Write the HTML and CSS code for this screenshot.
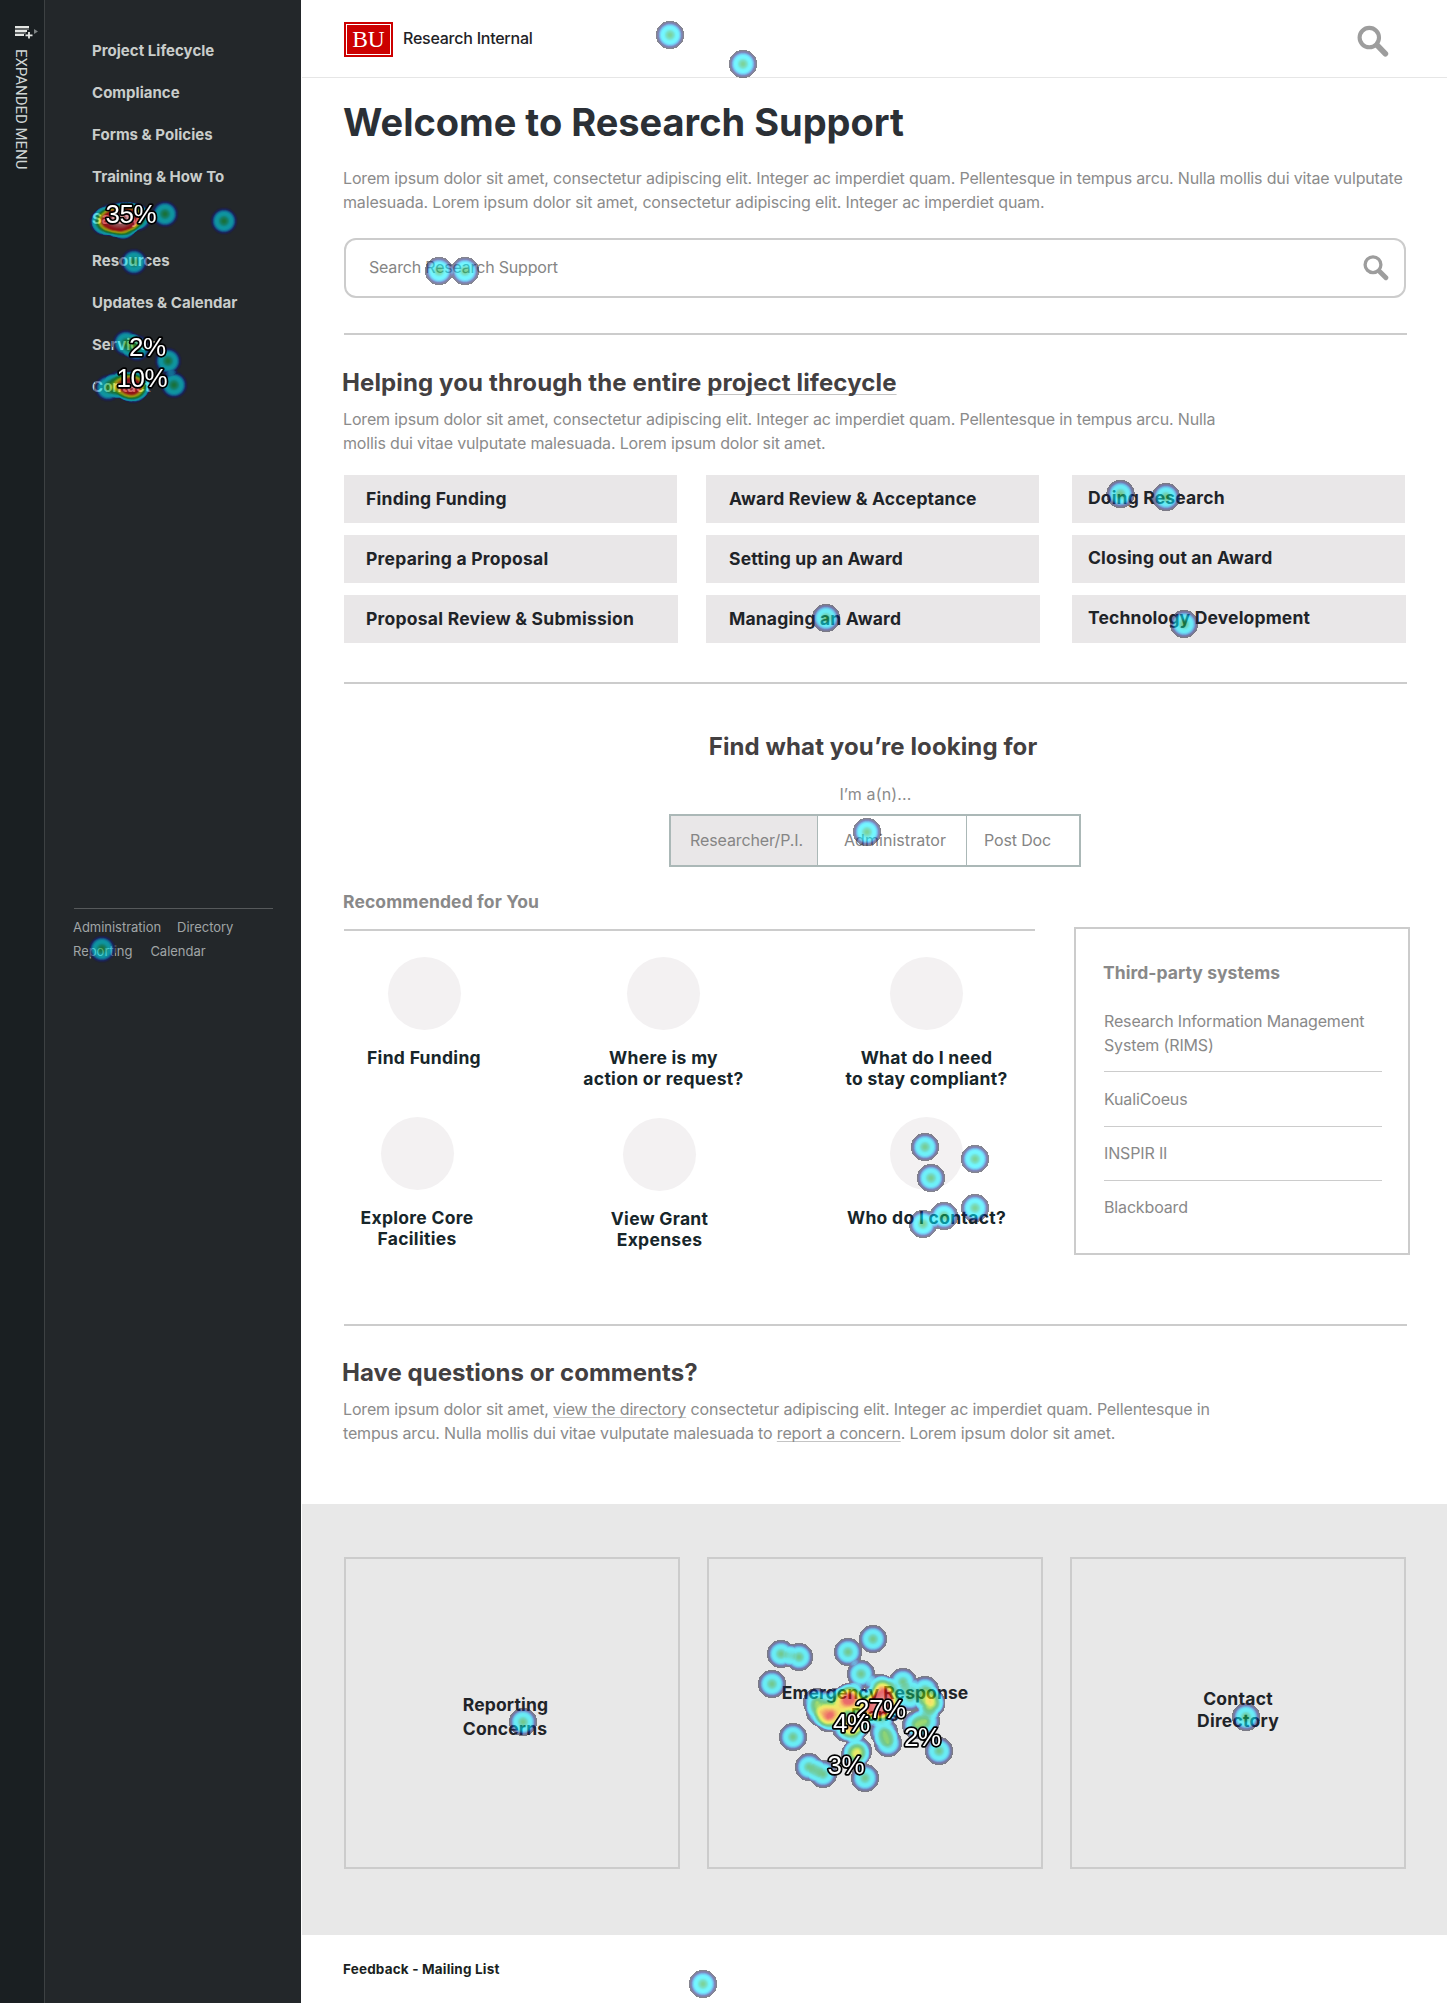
FILE: index.html
```html
<!DOCTYPE html>
<html lang="en">
<head>
<meta charset="utf-8">
<title>Research Support</title>
<link rel="stylesheet" href="styles.css">
</head>
<body>
<div class="page">
  <aside class="rail">
    <svg class="rail-icon" width="26" height="14" viewBox="0 0 26 14">
      <path d="M0 1h14M0 5h12M0 9h9" transform="translate(0 1)" stroke="#e4e6e4" stroke-width="2"/>
      <path d="M0 4h14M0 8h11" stroke="#a9adab" stroke-width="1"/>
      <path d="M14 7v7M10.5 10.5h7" stroke="#1a1f22" stroke-width="4"/>
      <path d="M14 7v6.5M10.5 10.3h7" stroke="#e4e6e4" stroke-width="1.8"/>
      <path d="M19 4l4 2.5-4 2.5z" fill="#7d8284"/>
    </svg>
    <span class="rail-label">EXPANDED MENU</span>
  </aside>
  <nav class="sidebar">
    <ul class="nav">
      <li>Project Lifecycle</li>
      <li>Compliance</li>
      <li>Forms &amp; Policies</li>
      <li>Training &amp; How To</li>
      <li>Safety</li>
      <li>Resources</li>
      <li>Updates &amp; Calendar</li>
      <li>Services</li>
      <li>Contact</li>
    </ul>
    <div class="subnav">
      <div class="subnav-row"><span>Administration</span><span>Directory</span></div>
      <div class="subnav-row wide"><span>Reporting</span><span>Calendar</span></div>
    </div>
  </nav>
  <main class="main">
    <header class="header">
      <div class="logo"><span>BU</span></div>
      <span class="site">Research Internal</span>
      <svg class="header-search" width="33" height="33" viewBox="0 0 33 33" fill="none" stroke="#9d9d9d">
        <circle cx="12.3" cy="12.6" r="9.7" stroke-width="4.1"/>
        <path d="M20.2 20.3l8.2 8.4" stroke-width="5.6" stroke-linecap="round"/>
      </svg>
    </header>

    <div class="content">
      <h1>Welcome to Research Support</h1>
      <p class="copy intro">Lorem ipsum dolor sit amet, consectetur adipiscing elit. Integer ac imperdiet quam. Pellentesque in tempus arcu. Nulla mollis dui vitae vulputate<br>malesuada. Lorem ipsum dolor sit amet, consectetur adipiscing elit. Integer ac imperdiet quam.</p>
      <div class="search">
        <span>Search Research Support</span>
        <svg width="27" height="27" viewBox="0 0 27 27" fill="none" stroke="#9d9d9d">
          <circle cx="10" cy="10.7" r="7.9" stroke-width="3.3"/>
          <path d="M16.4 17.2l6.5 6.6" stroke-width="4.8" stroke-linecap="round"/>
        </svg>
      </div>

      <section class="section lifecycle">
        <h2>Helping you through the entire <a>project lifecycle</a></h2>
        <p class="copy">Lorem ipsum dolor sit amet, consectetur adipiscing elit. Integer ac imperdiet quam. Pellentesque in tempus arcu. Nulla<br>mollis dui vitae vulputate malesuada. Lorem ipsum dolor sit amet.</p>
        <div class="tiles">
          <div class="tile">Finding Funding</div>
          <div class="tile mid">Award Review &amp; Acceptance</div>
          <div class="tile last">Doing Research</div>
          <div class="tile">Preparing a Proposal</div>
          <div class="tile mid">Setting up an Award</div>
          <div class="tile last">Closing out an Award</div>
          <div class="tile wider">Proposal Review &amp; Submission</div>
          <div class="tile mid wider">Managing an Award</div>
          <div class="tile last wider">Technology Development</div>
        </div>
      </section>

      <section class="section finder">
        <h2>Find what you’re looking for</h2>
        <p class="copy who">I’m a(n)...</p>
        <div class="tabs">
          <span class="tab active">Researcher/P.I.</span>
          <span class="tab second">Administrator</span>
          <span class="tab third">Post Doc</span>
        </div>
        <div class="columns">
          <div class="recommended">
            <h3>Recommended for You</h3>
            <div class="picks first">
              <div class="pick"><i></i>Find Funding</div>
              <div class="pick"><i></i>Where is my<br>action or request?</div>
              <div class="pick"><i></i>What do I need<br>to stay compliant?</div>
            </div>
            <div class="picks second">
              <div class="pick"><i></i>Explore Core<br>Facilities</div>
              <div class="pick lower"><i></i>View Grant<br>Expenses</div>
              <div class="pick"><i></i>Who do I contact?</div>
            </div>
          </div>
          <aside class="panel">
            <h3>Third-party systems</h3>
            <ul>
              <li>Research Information Management<br>System (RIMS)</li>
              <li>KualiCoeus</li>
              <li>INSPIR II</li>
              <li>Blackboard</li>
            </ul>
          </aside>
        </div>
      </section>

      <section class="section questions">
        <h2>Have questions or comments?</h2>
        <p class="copy">Lorem ipsum dolor sit amet, <a>view the directory</a> consectetur adipiscing elit. Integer ac imperdiet quam. Pellentesque in<br>tempus arcu. Nulla mollis dui vitae vulputate malesuada to <a>report a concern</a>. Lorem ipsum dolor sit amet.</p>
      </section>
    </div>

    <section class="cards">
      <div class="card reporting"><span>Reporting<br>Concerns</span></div>
      <div class="card emergency"><span>Emergency Response<br>Plans</span></div>
      <div class="card contact"><span>Contact<br>Directory</span></div>
    </section>
    <footer class="footer">Feedback - Mailing List</footer>
  </main>

  <svg class="heatmap" width="1447" height="2003" viewBox="0 0 1447 2003">
    <defs>
      <radialGradient id="click">
        <stop offset="0" stop-opacity=".44"/>
        <stop offset=".3" stop-opacity=".33"/>
        <stop offset=".55" stop-opacity=".21"/>
        <stop offset=".75" stop-opacity=".115"/>
        <stop offset=".93" stop-opacity=".04"/>
        <stop offset="1" stop-opacity="0"/>
      </radialGradient>
      <circle id="c" r="15" fill="url(#click)"/>
      <!-- maps accumulated click density to the heat palette -->
      <filter id="heat" x="0" y="0" width="1447" height="2003" filterUnits="userSpaceOnUse" color-interpolation-filters="sRGB">
        <feColorMatrix in="SourceGraphic" values="0 0 0 1 0  0 0 0 1 0  0 0 0 1 0  0 0 0 0 1"/>
        <feComponentTransfer result="palette">
          <feFuncR type="table" tableValues=".13 .13 .08 .03 0 0 0 .04 .06 .08 .3 .6 .9 1 1 .98 .94 .9 .9 .92 .98"/>
          <feFuncG type="table" tableValues=".13 .13 .12 .6 .9 .95 .9 .78 .7 .68 .78 .88 .93 .88 .68 .38 .05 0 .1 .3 .65"/>
          <feFuncB type="table" tableValues=".2 .2 .5 .9 1 1 .92 .6 .35 .2 .08 0 0 0 0 0 0 .04 .12 .32 .68"/>
        </feComponentTransfer>
        <feComponentTransfer in="SourceGraphic" result="shape">
          <feFuncA type="discrete" tableValues="0 .55 .55 .55 .55 .55 .55 .55 .55 .55 .55 .55 .55 .55 .55 .55 .55 .55 .55 .55 .55 .55 .55 .55 .55 .55 .55 .55 .55 .55"/>
        </feComponentTransfer>
        <feComposite in="palette" in2="shape" operator="in"/>
      </filter>
    </defs>
    <g filter="url(#heat)">
      <use href="#c" x="103" y="222"/><use href="#c" x="106" y="221"/><use href="#c" x="110" y="217"/><use href="#c" x="113" y="220"/><use href="#c" x="116" y="223"/><use href="#c" x="118" y="216"/><use href="#c" x="122" y="226"/><use href="#c" x="124" y="215"/><use href="#c" x="126" y="221"/><use href="#c" x="131" y="217"/><use href="#c" x="134" y="216"/><use href="#c" x="112" y="223"/><use href="#c" x="124" y="225"/><use href="#c" x="138" y="218"/><use href="#c" x="128" y="216"/><use href="#c" x="120" y="220"/><use href="#c" x="116" y="219"/><use href="#c" x="127" y="221"/>
      <use href="#c" x="165" y="214"/><use href="#c" x="224" y="221"/><use href="#c" x="134" y="262"/>
      <use href="#c" x="126" y="343"/><use href="#c" x="137" y="348"/><use href="#c" x="168" y="361"/><use href="#c" x="174" y="385"/>
      <use href="#c" x="108" y="388"/><use href="#c" x="119" y="384"/><use href="#c" x="124" y="386"/><use href="#c" x="129" y="387"/><use href="#c" x="133" y="390"/><use href="#c" x="136" y="387"/><use href="#c" x="128" y="384"/><use href="#c" x="138" y="384"/><use href="#c" x="131" y="387"/>
      <use href="#c" x="102" y="949"/>
      <use href="#c" x="670" y="35"/><use href="#c" x="743" y="64"/><use href="#c" x="439" y="271"/><use href="#c" x="465" y="271"/>
      <use href="#c" x="826" y="618"/><use href="#c" x="1120.500" y="494"/><use href="#c" x="1166" y="497"/><use href="#c" x="1184" y="624"/><use href="#c" x="867" y="832"/>
      <use href="#c" x="925" y="1147"/><use href="#c" x="975" y="1159"/><use href="#c" x="931" y="1178"/><use href="#c" x="975" y="1208"/><use href="#c" x="944" y="1216"/><use href="#c" x="923" y="1224"/>
      <use href="#c" x="523" y="1722"/><use href="#c" x="1246" y="1717"/><use href="#c" x="703" y="1984"/>
      <use href="#c" x="781" y="1654"/><use href="#c" x="799" y="1657"/><use href="#c" x="848" y="1652"/><use href="#c" x="873" y="1639"/><use href="#c" x="772" y="1684"/><use href="#c" x="861" y="1674"/><use href="#c" x="793" y="1737"/><use href="#c" x="809" y="1767"/><use href="#c" x="823" y="1774"/><use href="#c" x="865" y="1778"/><use href="#c" x="939" y="1751"/>
      <use href="#c" x="903" y="1682"/><use href="#c" x="910" y="1697"/><use href="#c" x="925" y="1690"/><use href="#c" x="930" y="1701"/><use href="#c" x="931" y="1704"/><use href="#c" x="926" y="1721"/><use href="#c" x="916" y="1725"/><use href="#c" x="858" y="1751"/><use href="#c" x="855" y="1755"/><use href="#c" x="884" y="1732"/><use href="#c" x="888" y="1743"/>
      <use href="#c" x="817" y="1702"/><use href="#c" x="820" y="1712"/><use href="#c" x="829" y="1715"/><use href="#c" x="832" y="1716"/><use href="#c" x="828" y="1718"/><use href="#c" x="843" y="1712"/><use href="#c" x="836" y="1702"/>
      <use href="#c" x="847" y="1699"/><use href="#c" x="850" y="1701"/><use href="#c" x="853" y="1697"/><use href="#c" x="849" y="1697"/><use href="#c" x="846" y="1728"/><use href="#c" x="852" y="1728"/><use href="#c" x="855" y="1727"/><use href="#c" x="860" y="1718"/><use href="#c" x="863" y="1708"/>
      <use href="#c" x="873" y="1709"/><use href="#c" x="876" y="1712"/><use href="#c" x="871" y="1702"/><use href="#c" x="880" y="1688"/><use href="#c" x="884" y="1690"/><use href="#c" x="886" y="1694"/><use href="#c" x="882" y="1700"/><use href="#c" x="887" y="1705"/><use href="#c" x="880" y="1706"/><use href="#c" x="890" y="1701"/><use href="#c" x="884" y="1711"/><use href="#c" x="877" y="1704"/><use href="#c" x="884" y="1704"/>
    </g>
    <g class="shares">
      <text x="105.500" y="222.500">35%</text>
      <text x="129" y="356">2%</text>
      <text x="116.500" y="386.500">10%</text>
      <text x="855" y="1717.500">27%</text>
      <text x="833" y="1732">4%</text>
      <text x="904" y="1745.500">2%</text>
      <text x="827.500" y="1773.500">3%</text>
    </g>
  </svg>
</div>
</body>
</html>
```
FILE: styles.css
```css
* { box-sizing: border-box; }
body { margin: 0; background: #fff; font-family: Inter, sans-serif; }
h1, h2, h3, p, ul { margin: 0; padding: 0; }
ul { list-style: none; }

.page { position: relative; display: flex; width: 1447px; height: 2003px; overflow: hidden; }

/* left rail and navigation */
.rail { width: 45px; flex: none; background: #1a1f22; border-right: 1px solid #3d4143; display: flex; flex-direction: column; align-items: flex-start; padding: 25px 0 0 15px; }
.rail-icon { flex: none; }
.rail-label { margin-top: 10px; writing-mode: vertical-rl; font: 400 15px/16px Roboto, sans-serif; letter-spacing: -0.04px; color: #d0d6d5; white-space: nowrap; margin-left: -2px; }
.sidebar { width: 256px; flex: none; background: #23272a; padding-top: 30px; }
.nav { padding-left: 47px; font-weight: 700; font-size: 15px; line-height: 42px; letter-spacing: 0.03px; color: #c9cdcb; }
.subnav { margin: 500px 28px 0 29px; padding-top: 6px; border-top: 1px solid #56595b; color: #a0a5a6; font-size: 13px; line-height: 24px; letter-spacing: -0.03px; }
.subnav-row { display: flex; gap: 16px; margin-left: -1px; }
.subnav-row.wide { gap: 18px; }

/* header */
.main { flex: 1; min-width: 0; margin-left: 1px; display: flex; flex-direction: column; }
.header { height: 78px; flex: none; display: flex; align-items: flex-start; border-bottom: 1px solid #e6e6e6; padding: 22px 57px 0 42px; }
.logo { width: 49px; height: 35px; background: #c00; padding: 2px; }
.logo span { display: block; height: 31px; border: 1px solid #fff; color: #fff; text-align: center; font: 23.5px/28px "Liberation Serif", serif; letter-spacing: 0; }
.site { margin: 4px 0 0 10px; font-size: 16px; line-height: 24px; font-weight: 500; letter-spacing: -0.24px; color: #1e2226; }
.header-search { margin: 3px 0 0 auto; }

/* shared type */
.content { padding-left: 42px; }
h1 { margin: 21px 0 0 -1px; font-size: 38px; line-height: 46px; font-weight: 700; letter-spacing: -0.01px; color: #2b3036; }
h2 { position: relative; font-size: 24px; line-height: 30px; font-weight: 700; letter-spacing: 0.12px; color: #434041; margin-left: -2px; white-space: nowrap; }
h3 { font-size: 17.5px; line-height: 24px; font-weight: 700; letter-spacing: 0.12px; color: #898989; }
.copy { margin: 9px 0 0 -1px; font-size: 16px; line-height: 24px; letter-spacing: -0.155px; color: #8b8b8b; white-space: nowrap; }
.copy.intro { margin-top: 21px; }
.copy a, h2 a { text-decoration: underline 1px #c4c4c4; text-underline-offset: 2px; text-decoration-skip-ink: none; }
h2 a { text-underline-offset: 3px; }

.search { width: 1062px; height: 60px; margin-top: 24px; border: 2px solid #ccc; border-radius: 12px; display: flex; align-items: center; justify-content: space-between; padding: 0 14px 2px 23px; font-size: 16px; line-height: 24px; letter-spacing: -0.19px; color: #858585; }

.section { width: 1063px; border-top: 2px solid #ccc; }
.lifecycle { margin-top: 35px; padding-top: 33px; }
.tiles { margin-top: 20px; display: grid; grid-template-columns: 333px 333px 333px; column-gap: 29px; grid-template-rows: repeat(3, 48px); row-gap: 12px; }
.tile { background: #e9e7e8; padding: 0 0 0 22px; font-size: 17.5px; line-height: 48px; font-weight: 700; letter-spacing: 0.25px; color: #1f2428; white-space: nowrap; }
.tile.mid { padding-left: 23px; letter-spacing: 0.17px; }
.tile.last { margin: 0 -4px 0 4px; padding-left: 16px; line-height: 46px; letter-spacing: 0.17px; }
.tile.wider { margin-right: -1px; }
.tile.last.wider { margin-right: -5px; }

/* role finder */
.finder { margin-top: 39px; padding-top: 48px; }
.finder h2 { text-align: center; letter-spacing: 0.1px; margin-left: -5px; }
.copy.who { margin: 20px 0 0; text-align: center; letter-spacing: 0.15px; }
.tabs { width: 412px; height: 53px; margin: 8px 0 0 325px; border: 2px solid #abb8b7; display: flex; font-size: 16px; line-height: 49px; letter-spacing: -0.1px; color: #858585; }
.tab { border-right: 1px solid #abb8b7; width: 147px; padding-left: 19px; }
.tab.active { background: #e9e7e8; }
.tab.second { width: 149px; padding-left: 26px; letter-spacing: 0.05px; }
.tab.third { width: 112px; padding-left: 17px; border: 0; letter-spacing: -0.15px; }

.columns { display: flex; margin-top: 23px; }
.recommended { width: 691px; flex: none; }
.recommended h3 { padding-bottom: 15px; border-bottom: 2px solid #ccc; text-indent: -1px; }
.picks { display: grid; }
.picks.first { margin-top: 26px; grid-template-columns: 160px 319px 207px; }
.picks.second { margin-top: 28px; grid-template-columns: 146px 339px 195px; }
.pick { text-align: center; font-size: 17.5px; line-height: 21px; font-weight: 700; letter-spacing: 0.3px; color: #17262a; white-space: nowrap; }
.pick i { display: block; width: 73px; height: 73px; border-radius: 50%; background: #f3f1f2; margin: 0 auto 17px; }
.pick.lower { padding-top: 1px; }

.panel { width: 336px; height: 328px; flex: none; margin: 37px 0 0 39px; border: 2px solid #ccc; padding: 32px 26px 0 28px; color: #898989; }
.panel h3 { letter-spacing: 0.05px; text-indent: -1px; }
.panel ul { margin-top: 24px; font-size: 16px; line-height: 24px; letter-spacing: -0.15px; white-space: nowrap; }
.panel li { padding: 14px 0 15px; border-bottom: 1px solid #ccc; }
.panel li:first-child { padding: 0 0 14px; }
.panel li:nth-child(2) { padding-top: 15px; }
.panel li:last-child { border: 0; }

.questions { margin-top: 69px; padding-top: 32px; }
.questions h2 { letter-spacing: 0.03px; }

/* bottom cards */
.cards { margin-top: 59px; height: 431px; flex: none; background: #e8e8e8; padding: 53px 41px 0 42px; display: flex; gap: 27px; align-items: flex-start; }
.card { width: 336px; height: 312px; flex: none; border: 2px solid #ccc; display: flex; justify-content: center; font-size: 17.5px; line-height: 22px; font-weight: 700; letter-spacing: 0.1px; color: #1f2428; text-align: center; white-space: nowrap; }
.card.reporting { text-align: left; line-height: 24px; padding: 134px 13px 0 0; letter-spacing: 0.15px; }
.card.emergency { padding-top: 123px; letter-spacing: 0.08px; }
.card.contact { padding-top: 129px; letter-spacing: 0.25px; }
.footer { padding: 24px 0 0 41px; font-size: 13.5px; line-height: 20px; font-weight: 700; letter-spacing: 0.18px; color: #1b1f22; }

/* click heatmap over the page */
.heatmap { position: absolute; left: 0; top: 0; pointer-events: none; }
.shares text { font: 26px "Liberation Sans", sans-serif; fill: #fff; stroke: #000; stroke-width: 3.4px; stroke-linejoin: round; paint-order: stroke; letter-spacing: -0.4px; }
```
